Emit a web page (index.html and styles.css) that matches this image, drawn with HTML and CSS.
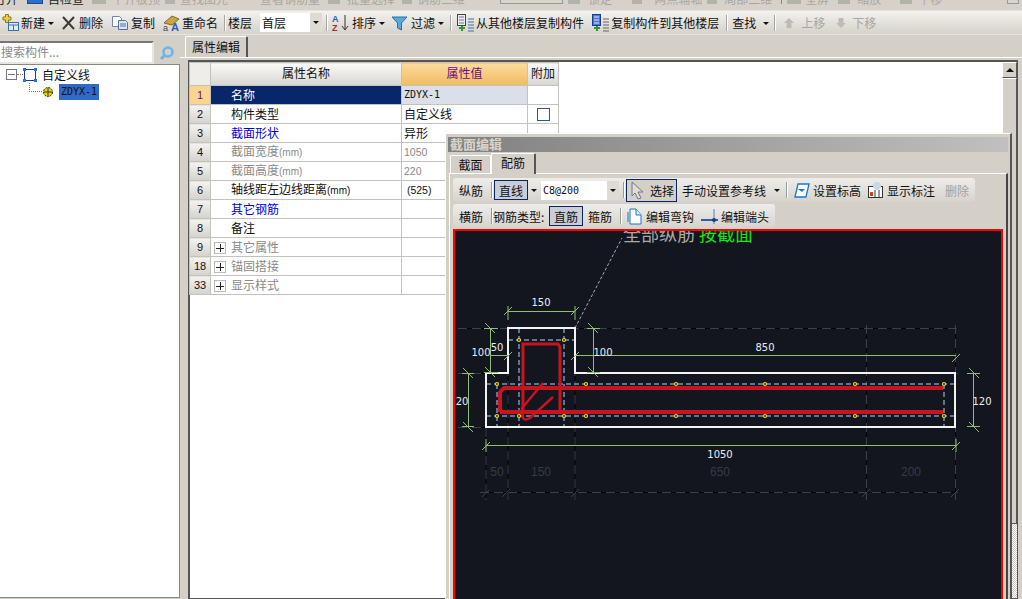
FILE: index.html
```html
<!DOCTYPE html>
<html lang="zh">
<head>
<meta charset="utf-8">
<title>属性编辑</title>
<link rel="stylesheet" href="styles.css">
</head>
<body>
<div class="app">
  <div class="topbar">
    <span class="ti dark mn6">打开</span><i class="tic blue w16 m9"></i><span class="ti dark m5">自检查</span>
    <i class="tic w14 m8"></i><span class="ti m6">平齐板顶</span><i class="tic w10 m5"></i><span class="ti m5">查找图元</span><span class="ti m32">查看钢筋量</span>
    <i class="tic w12 m8"></i><span class="ti m7">批量选择</span><i class="tic w10 m7"></i><span class="ti m5">钢筋三维</span>
    <i class="tbox m35"></i><i class="tic w12 m5"></i><span class="ti m8">锁定</span><i class="tic w10 m20"></i><span class="ti m12">两点辅轴</span>
    <i class="tic w10 m5"></i><span class="ti m7">局部三维</span><i class="tsep m9"></i><i class="tic w14 m5"></i><span class="ti m4">全屏</span>
    <i class="tic w12 m9"></i><span class="ti m7">缩放</span><i class="tic w12 m19"></i><span class="ti m6">平移</span><i class="tbox end m65"></i>
  </div>
  <div class="toolbar">
    <span class="tb"><svg width="18" height="18" viewBox="0 0 18 18"><path d="M3.500 0.500h3v2.500h2.500v3H6.500v2.500h-3V6H1V3h2.500z" fill="#e8d040" stroke="#8a7a20"/><rect x="6.500" y="8.500" width="10" height="8" fill="#dfe8f5" stroke="#3a70b0"/><path d="M6.500 11h10M11.500 11v5" stroke="#3a70b0"/></svg></span>
    <span class="tb">新建</span><span class="caret c3"></span>
    <span class="tb m6"><svg width="18" height="16" viewBox="0 0 18 16"><path d="M3 2l11 12M14 2L3 14" stroke="#3a3a3a" stroke-width="2"/></svg></span><span class="tb">删除</span>
    <span class="tb m8"><svg width="19" height="16" viewBox="0 0 19 16"><path d="M1.500 1.500h7l2 2v8h-9z" fill="#fff" stroke="#7088a8"/><path d="M7.500 5.500h7l2 2v7h-9z" fill="#dbe6f5" stroke="#5070a0"/><path d="M9 9h6M9 11h6" stroke="#5070a0"/></svg></span><span class="tb">复制</span>
    <span class="tb m8"><svg width="18" height="18" viewBox="0 0 18 18"><path d="M1 9l8-7 7 3-7 6z" fill="#c9a63e" stroke="#7d6a30"/><text x="0" y="17" class="rn-a">a</text><text x="8" y="17" class="rn-b">A</text></svg></span><span class="tb">重命名</span>
    <span class="sep m6 r2"></span><span class="tb">楼层</span>
    <span class="combo floor m8"><span>首层</span><i class="combo-btn"></i></span>
    <span class="sep m4 r3"></span>
    <span class="tb"><svg width="20" height="18" viewBox="0 0 20 18"><text x="1" y="8" class="az a">A</text><text x="1" y="17" class="az z">Z</text><path d="M14 1v14M11 12l3 4 3-4" fill="none" stroke="#333"/></svg></span><span class="tb">排序</span><span class="caret c3"></span>
    <span class="tb m6"><svg width="19" height="16" viewBox="0 0 19 16"><path d="M1 2h15l-5.500 6v7l-4-2V8z" fill="#58a8d8" stroke="#2a70a8"/></svg></span><span class="tb">过滤</span><span class="caret c3"></span>
    <span class="sep m6 r4"></span>
    <span class="tb"><svg width="19" height="18" viewBox="0 0 19 18"><rect x="1.500" y="0.500" width="8" height="11" fill="#e8eef8" stroke="#444"/><path d="M3 9h5M3 6h5M3 3h5" stroke="#777"/><path d="M3 14h6M6 12v5" stroke="#2a9a30" stroke-width="2"/><path d="M12 5h6M12 8h6M12 11h6M12 14h6M12 17h6" stroke="#4070a8"/></svg></span><span class="tb">从其他楼层复制构件</span>
    <span class="tb m8"><svg width="18" height="18" viewBox="0 0 18 18"><rect x="0.500" y="0.500" width="8" height="11" fill="#4a78d8" stroke="#1a3a90"/><path d="M2 3h5M2 6h5M2 9h5" stroke="#dfe8f8"/><path d="M2 14h6M5 12v5" stroke="#2a9a30" stroke-width="2"/><path d="M11 5h6M11 8h6M11 11h6M11 14h6M11 17h6" stroke="#666"/></svg></span><span class="tb">复制构件到其他楼层</span>
    <span class="sep m7 r4"></span><span class="tb">查找</span><span class="caret c7"></span>
    <span class="sep m5 r5"></span>
    <span class="tb off"><svg width="12" height="12" viewBox="0 0 12 12"><path d="M6 1l5 5H8.500v5h-5V6H1z" fill="#bbb"/></svg></span><span class="tb off m5">上移</span>
    <span class="tb off m10"><svg width="12" height="12" viewBox="0 0 12 12"><path d="M6 11L1 6h2.500V1h5v5H11z" fill="#bbb"/></svg></span><span class="tb off m4">下移</span>
  </div>
  <div class="main">
    <aside class="left">
      <div class="search"><span class="search-box">搜索构件...</span><svg width="18" height="18" viewBox="0 0 18 18"><circle cx="10" cy="8" r="4.500" fill="none" stroke="#6ab4ea" stroke-width="2.500"/><path d="M7 11l-4 4" stroke="#6ab4ea" stroke-width="3"/></svg></div>
      <div class="tree">
        <div class="node"><span class="minus"></span><i class="dots"></i><svg width="14" height="14" viewBox="0 0 14 14"><rect x="1.500" y="1.500" width="11" height="11" fill="#fff" stroke="#18407f"/><path d="M0 0h3v3H0zM11 0h3v3h-3zM0 11h3v3H0zM11 11h3v3h-3z" fill="#2a70e0"/></svg><span class="node-label">自定义线</span></div>
        <div class="node child"><i class="elbow"></i><svg width="12" height="12" viewBox="0 0 12 12"><circle cx="6" cy="6" r="4.500" fill="#e6d800" stroke="#222" stroke-dasharray="2 1"/><path d="M2 6h8M6 2v8" stroke="#333"/></svg><span class="sel">ZDYX-1</span></div>
      </div>
    </aside>
    <section class="right">
      <div class="tabs"><span class="tab">属性编辑</span></div>
      <div class="pane">
        <div class="grid-wrap">
          <table class="grid">
            <tr class="head"><th class="idx"></th><th class="name">属性名称</th><th class="val">属性值</th><th class="add">附加</th></tr>
            <tr class="cur"><td class="idx">1</td><td class="name">名称</td><td class="val mono">ZDYX-1</td><td class="add"></td></tr>
            <tr><td class="idx">2</td><td class="name">构件类型</td><td class="val">自定义线</td><td class="add"><i class="check"></i></td></tr>
            <tr><td class="idx">3</td><td class="name blue">截面形状</td><td class="val">异形</td><td class="add"></td></tr>
            <tr><td class="idx">4</td><td class="name gray">截面宽度<span class="unit">(mm)</span></td><td class="val gray num">1050</td><td class="add"></td></tr>
            <tr><td class="idx">5</td><td class="name gray">截面高度<span class="unit">(mm)</span></td><td class="val gray num">220</td><td class="add"></td></tr>
            <tr><td class="idx">6</td><td class="name">轴线距左边线距离<span class="unit">(mm)</span></td><td class="val num">&nbsp;(525)</td><td class="add"></td></tr>
            <tr><td class="idx">7</td><td class="name blue">其它钢筋</td><td class="val"></td><td class="add"></td></tr>
            <tr><td class="idx">8</td><td class="name">备注</td><td class="val"></td><td class="add"></td></tr>
            <tr><td class="idx">9</td><td class="name gray plus"><i class="pl"></i>其它属性</td><td class="val"></td><td class="add"></td></tr>
            <tr><td class="idx">18</td><td class="name gray plus"><i class="pl"></i>锚固搭接</td><td class="val"></td><td class="add"></td></tr>
            <tr><td class="idx">33</td><td class="name gray plus"><i class="pl"></i>显示样式</td><td class="val"></td><td class="add"></td></tr>
          </table>
          <div class="vscroll"><span class="sb-up"></span><span class="sb-thumb"></span><span class="sb-track"></span></div>
        </div>
      </div>
    </section>
  </div>

  <div class="dialog">
    <div class="dlg-title">截面编辑</div>
    <div class="dlg-tabs"><span class="dtab">截面</span><span class="dtab on">配筋</span></div>
    <div class="dlg-body">
      <div class="bar">
        <span class="b">纵筋</span><i class="bsep m8"></i><span class="b press m1">直线</span><span class="caret c3"></span>
        <span class="combo c8 m4"><span>C8@200</span><i class="combo-btn"></i></span><i class="bsep m4"></i>
        <span class="b press sel-btn m1"><svg width="18" height="19" viewBox="0 0 18 19"><path d="M3 1l11 10H9l3 6-3 1-3-6-3 3z" fill="#ddd" stroke="#777"/></svg>选择</span>
        <span class="b m5">手动设置参考线</span><span class="caret c8w"></span><i class="bsep m6"></i>
        <span class="b m6"><svg class="gap3" width="16" height="15" viewBox="0 0 16 15"><path d="M4 1h11l-3 13H1z" fill="#fff" stroke="#1878c8" stroke-width="1.300"/><path d="M4 6h7l-3 3z" fill="#1878c8"/></svg>设置标高</span>
        <span class="b m7"><svg class="gap4" width="15" height="16" viewBox="0 0 15 16"><rect x="0.500" y="4.500" width="14" height="11" fill="#fff" stroke="#333"/><circle cx="9" cy="4" r="4" fill="#c8d8e8"/><path d="M7 8v7M11 8v7" stroke="#333"/><rect x="2" y="10" width="3" height="4" fill="#d04020"/></svg>显示标注</span>
        <span class="b dim m10">删除</span>
      </div>
      <div class="bar">
        <span class="b">横筋</span><i class="bsep m8"></i><span class="b rtype">钢筋类型:</span><span class="b press m3">直筋</span><span class="b m5">箍筋</span><i class="bsep m8"></i>
        <span class="b m5"><svg class="gap3" width="16" height="17" viewBox="0 0 16 17"><path d="M3 1h6l5 6v9H3z" fill="#fff" stroke="#1878c8"/><path d="M9 1v6h5" fill="#dce8f5" stroke="#1878c8"/><path d="M1 4v10" stroke="#1878c8"/></svg>编辑弯钩</span>
        <span class="b m7"><svg class="gap3" width="17" height="17" viewBox="0 0 17 17"><path d="M0 12h17" stroke="#2a60b0" stroke-width="2"/><path d="M13 1v15" stroke="#5080c0"/><circle cx="13" cy="12" r="2" fill="#1a3a80"/></svg>编辑端头</span>
      </div>
      <div class="canvas">
        <svg class="drawing" width="546" height="368" viewBox="455 231 546 368">
          <defs>
            <g id="grid-lines">
              <path d="M458 328.500H958M458 373.500H490M575 373.500H958M458 427.500H486"/>
              <path d="M508 325V500M575 325V500M866.500 325V500M955.500 325V500"/>
              <path d="M486 428V500M480 492.500H958"/>
            </g>
          </defs>
          <use href="#grid-lines" class="dash-black"/>
          <use href="#grid-lines" class="dash-gray"/>
          <path class="tick" d="M482 497l7-7M502 497l8-8M571 497l8-8M862 497l8-8M951 497l8-8"/>
          <g class="dash-blue">
            <path d="M519 328V428M564 328V428M497 384V428M944 384V428"/>
            <path d="M508 340H575M486 384H955M486 416H955"/>
          </g>
          <path class="leader" d="M575 328L622 238"/>
          <path class="outline" d="M508 328H575V373H955V427H486V373H508Z"/>
          <g class="rebar">
            <path class="thin" d="M523 412V344H558L560 347V412"/>
            <path d="M500 412V392L504 388H943M500 412H943"/>
            <path class="hook" d="M523 407L543 383M553 397L530 418Q525 421 523 418L522 407"/>
          </g>
          <g class="pts">
            <circle cx="519" cy="340" r="1.500"/><circle cx="564" cy="340" r="1.500"/>
            <circle cx="497" cy="384" r="1.500"/><circle cx="586" cy="384" r="1.500"/><circle cx="676" cy="384" r="1.500"/><circle cx="765" cy="384" r="1.500"/><circle cx="855" cy="384" r="1.500"/><circle cx="944" cy="384" r="1.500"/>
            <circle cx="497" cy="416" r="1.500"/><circle cx="519" cy="416" r="1.500"/><circle cx="564" cy="416" r="1.500"/><circle cx="586" cy="416" r="1.500"/><circle cx="676" cy="416" r="1.500"/><circle cx="765" cy="416" r="1.500"/><circle cx="855" cy="416" r="1.500"/><circle cx="944" cy="416" r="1.500"/>
          </g>
          <g class="dim-line">
            <path d="M508 311.500H575M504 315l8-8M571 315l8-8M508 306V320M575 306V320"/>
            <path d="M490.500 328V373M484 328.500H498M484 372.500H498M485 323l10 10M485 367l10 10"/>
            <path d="M508 355.500H490M504 360l8-8M575 355.500H956M571 360l8-8M952 362l8-8"/>
            <path d="M593.500 328V373M587 328.500H600M587 372.500H600M588 323l10 10M588 367l10 10"/>
            <path d="M468.500 373V427M462 373.500H474M462 426.500H474M463 368l10 10M463 422l10 10"/>
            <path d="M973.500 373V427M967 373.500H980M967 426.500H980M969 368l10 10M969 422l10 10"/>
            <path d="M486 445.500H956M482 450l8-8M952 450l8-8M486 439V452M956 439V452"/>
          </g>
          <g class="label">
            <text x="541" y="306">150</text>
            <text x="497" y="351">50</text>
            <text x="481" y="356">100</text>
            <text x="603" y="356">100</text>
            <text x="765" y="351">850</text>
            <text x="462" y="405">20</text>
            <text x="982" y="405">120</text>
            <text x="720" y="458">1050</text>
          </g>
          <g class="label-dim">
            <text x="497" y="476">50</text>
            <text x="541" y="476">150</text>
            <text x="720" y="476">650</text>
            <text x="911" y="476">200</text>
          </g>
          <text class="note" x="623" y="241">全部纵筋 <tspan class="note-g">按截面</tspan></text>
        </svg>
      </div>
    </div>
  </div>
</div>
</body>
</html>
```
FILE: styles.css
```css
* { box-sizing: border-box; }
html, body { margin: 0; height: 100%; overflow: hidden; }
body { font-family: "Noto Sans CJK SC", "Liberation Sans", sans-serif; font-size: 12px; color: #111; background: #d4d0c8; }
.app { position: relative; width: 1022px; height: 599px; overflow: hidden; background: #d4d0c8; }
svg { display: block; flex: none; }

.m1 { margin-left: 1px; }
.m3 { margin-left: 3px; }
.m4 { margin-left: 4px; }
.m5 { margin-left: 5px; }
.m6 { margin-left: 6px; }
.m7 { margin-left: 7px; }
.m8 { margin-left: 8px; }
.m9 { margin-left: 9px; }
.m10 { margin-left: 10px; }
.m12 { margin-left: 12px; }
.m19 { margin-left: 19px; }
.m20 { margin-left: 20px; }
.m32 { margin-left: 32px; }
.m35 { margin-left: 35px; }
.m65 { margin-left: 65px; }
.mn6 { margin-left: -6px; }

.topbar { height: 11px; overflow: hidden; display: flex; align-items: flex-start; background: #d6d2cb; border-bottom: 1px solid #e4e2dc; white-space: nowrap; }
.ti { flex: none; line-height: 14px; margin-top: -8px; color: #a9a7a1; }
.ti.dark { color: #222; }
.tic { flex: none; display: block; height: 4px; background: #b4b2ac; }
.tic.blue { background: #2a70c8; border: 1px solid #1a4a90; border-top: 0; }
.w10 { width: 10px; }
.w12 { width: 12px; }
.w14 { width: 14px; }
.w16 { width: 16px; }
.tbox { flex: none; display: block; width: 63px; height: 4px; background: #d8d5ce; border: 1px solid #999; border-top: 0; }
.tbox.end { width: 12px; }
.tsep { flex: none; display: block; width: 1px; height: 4px; background: #888; }

.toolbar { height: 24px; display: flex; align-items: center; padding-left: 2px; background: linear-gradient(#f3f2ef, #dedbd5 70%, #d6d3cc); border-bottom: 1px solid #e6e4df; white-space: nowrap; }
.tb { display: inline-flex; align-items: center; height: 20px; flex: none; }
.tb svg { margin-right: 1px; }
.off { color: #a8a6a0; }
.caret { width: 0; height: 0; flex: none; border: 3px solid transparent; border-top: 3px solid #111; border-bottom: 0; margin: 1px 0 0; }
.c3 { margin-left: 3px; }
.c7 { margin-left: 7px; }
.c8w { margin-left: 8px; }
.sep { width: 2px; height: 16px; flex: none; background: #fff; border-left: 1px solid #a8a6a0; }
.r2 { margin-right: 2px; }
.r3 { margin-right: 3px; }
.r4 { margin-right: 4px; }
.r5 { margin-right: 7px; }
.combo { display: inline-flex; flex: none; align-items: center; justify-content: space-between; background: #fff; padding-left: 2px; white-space: nowrap; }
.combo-btn { display: flex; align-items: center; justify-content: center; width: 12px; height: 100%; background: #dedbd5; }
.combo-btn::after { content: ""; border: 3px solid transparent; border-top: 3px solid #111; border-bottom: 0; }
.floor { width: 62px; height: 19px; }

.main { display: flex; height: 564px; }
.left { width: 180px; flex: none; padding-top: 6px; background: #d4d0c8; }
.search { display: flex; align-items: center; height: 23px; gap: 4px; }
.search-box { width: 154px; height: 23px; background: #fff; border: 2px solid; border-color: #777 #e8e6e0 #e8e6e0 #777; border-left: 0; color: #888; line-height: 17px; padding-left: 1px; }
.tree { height: 534px; background: #fff; border: 1px solid #8a887f; border-left: 0; padding-top: 1px; }
.node { display: flex; align-items: center; height: 17px; padding-left: 6px; }
.minus { width: 11px; height: 11px; border: 1px solid #777; background: linear-gradient(#777, #777) center / 7px 1px no-repeat #fff; }
.dots { width: 6px; border-top: 1px dotted #777; }
.node-label { margin-left: 5px; }
.child { padding-left: 29px; }
.elbow { width: 13px; height: 9px; margin-top: -9px; border-left: 1px dotted #777; border-bottom: 1px dotted #777; }
.sel { background: #316ac5; color: #111; font-family: "DejaVu Sans Mono", monospace; font-size: 10px; line-height: 16px; padding: 0 2px; margin-left: 5px; }

.right { flex: 1; min-width: 0; display: flex; flex-direction: column; padding: 1px 0 0 8px; }
.tabs { height: 21px; display: flex; margin-left: -3px; }
.tab { display: block; width: 63px; height: 21px; background: #d4d0c8; border: 1px solid #fff; border-right: 2px solid #555; border-bottom: 0; border-radius: 2px 2px 0 0; padding-left: 6px; line-height: 20px; }
.pane { flex: 1; padding: 2px 0 0; margin-left: -8px; padding-left: 8px; background: #d4d0c8; border-top: 1px solid #fff; }
.grid-wrap { height: 100%; width: 830px; position: relative; display: flex; background: #fff; border: 1px solid #555; border-width: 2px 1px 1px 2px; }
.grid { border-collapse: collapse; table-layout: fixed; width: 369px; height: 0; align-self: flex-start; margin-left: -1px; }
.grid th, .grid td { height: 19px; padding: 0; border: 1px solid #c4c2bc; font-weight: 400; overflow: hidden; white-space: nowrap; line-height: 16px; }
.grid tr { height: 19px; }
.grid .head th { height: 23px; padding-bottom: 2px; background: linear-gradient(#fafaf8, #d8d6d0); text-align: center; }
.grid .head .idx { width: 21px; background: #eeede9; }
.grid .head .name { width: 191px; }
.grid .head .val { width: 126px; background: linear-gradient(#fbdb9c, #f0bc60); color: #6a1080; }
.grid .head .add { width: 31px; }
.grid td.idx { text-align: center; background: linear-gradient(#f4f3f0, #d4d2cc); font-family: "Liberation Sans", sans-serif; font-size: 11px; }
.grid td.name { padding-left: 20px; }
.grid td.val { padding-left: 2px; }
.grid .cur .idx { background: #fbd58e; color: #6a1080; }
.grid .cur .name { background: #08266a; color: #fff; }
.grid .cur .val { background: #dbdfe9; }
.grid td.mono { font-family: "DejaVu Sans Mono", monospace; font-size: 10px; }
.grid td.num { font-family: "Liberation Sans", sans-serif; font-size: 10.500px; }
.unit { font-family: "Liberation Sans", sans-serif; font-size: 10px; }
.blue { color: #0000e0; }
.gray { color: #8a8a8a; }
.grid td.plus { padding-left: 3px; }
.pl { display: inline-block; width: 12px; height: 12px; margin-right: 5px; vertical-align: -2px; border: 1px solid #bbb; background: linear-gradient(#222, #222) center / 8px 1px no-repeat, linear-gradient(#222, #222) center / 1px 8px no-repeat, #fff; }
.check { display: block; width: 13px; height: 13px; margin: 0 auto; border: 1px solid #2a5a8a; background: #fff; }
.vscroll { position: absolute; right: 0; top: 0; bottom: 0; width: 15px; display: flex; flex-direction: column; background: #d4d0c8; }
.sb-up { height: 16px; flex: none; background: #d4d0c8; border: 1px solid; border-color: #fff #555 #555 #fff; display: flex; align-items: center; justify-content: center; }
.sb-up::after { content: ""; border: 4px solid transparent; border-bottom: 4px solid #111; border-top: 0; }
.sb-thumb { height: 446px; flex: none; border: 1px solid; border-color: #fff #555 #555 #fff; background: #d4d0c8; }
.sb-track { flex: 1; background: repeating-conic-gradient(#fff 0 25%, #d4d0c8 0 50%) 0 0 / 2px 2px; }

.dialog { position: absolute; left: 445px; top: 133px; width: 567px; height: 480px; background: #d4d0c8; border: 1px solid #fff; border-right: 2px solid #555; border-bottom: 2px solid #555; padding: 3px 2px; }
.dlg-title { height: 15px; background: linear-gradient(90deg, #808080, #c0c0c0); color: #d8d4cc; font-weight: 700; font-size: 13px; line-height: 14px; padding-left: 2px; overflow: hidden; }
.dlg-tabs { display: flex; height: 21px; padding: 0 0 0 2px; align-items: flex-end; }
.dtab { height: 18px; width: 41px; background: #d4d0c8; border: 1px solid #fff; border-bottom: 0; border-radius: 2px 2px 0 0; text-align: center; line-height: 17px; }
.dtab.on { height: 21px; width: 45px; border-right: 2px solid #555; line-height: 17px; margin-bottom: -1px; position: relative; z-index: 1; }
.dlg-body { height: 440px; margin-left: 1px; border: 1px solid; border-color: #fff #444 #444 #fff; border-right-width: 2px; padding: 4px 0 0 3px; }
.bar { display: flex; align-items: center; height: 24px; width: fit-content; padding: 0 6px; margin-bottom: 2px; background: linear-gradient(#eeedea, #d6d3cc); border-radius: 3px; white-space: nowrap; }
.b { display: inline-flex; align-items: center; height: 20px; flex: none; }
.press { width: 34px; justify-content: center; background: #c9cdd8; border: 1px solid #0a246a; height: 20px; }
.sel-btn { width: 51px; justify-content: flex-start; padding-left: 2px; height: 23px; background: #d4d0c8; }
.sel-btn svg { margin-right: 3px; }
.gap3 { margin-right: 3px; }
.gap4 { margin-right: 4px; }
.dim { color: #a3a19b; }
.rtype { width: 53px; }
.bsep { display: block; flex: none; width: 2px; height: 16px; border-left: 1px solid #999; background: #fff; }
.bar .c8 { width: 78px; height: 19px; font-family: "DejaVu Sans Mono", monospace; font-size: 10px; }
.canvas { height: 390px; width: 550px; margin-top: -1px; border: 2px solid #f00; background: #13161e; overflow: hidden; }
.dash-black { fill: none; stroke: #000; }
.dash-gray { fill: none; stroke: #3c4048; stroke-dasharray: 9 5; }
.tick { fill: none; stroke: #3c4048; }
.dash-blue path { fill: none; stroke: #a8d8ff; stroke-dasharray: 5 3; }
.leader { fill: none; stroke: #aaa; stroke-dasharray: 3 2; }
.outline { fill: none; stroke: #f4f4f4; stroke-width: 2; }
.rebar path { fill: none; stroke: #c8141e; stroke-width: 4; }
.rebar .thin { stroke-width: 3; }
.rebar .hook { stroke-width: 2.500; }
.pts circle { fill: #13161e; stroke: #ffd820; stroke-width: 1.200; }
.dim-line path { fill: none; stroke: #8ec070; }
.label text { fill: #e6eef4; font-family: "DejaVu Sans", sans-serif; font-size: 10px; text-anchor: middle; }
.label-dim text { fill: #373b44; font-family: "Liberation Sans", sans-serif; font-size: 12px; text-anchor: middle; }
.note { fill: #a8a8a8; font-size: 18px; }
.note-g { fill: #10e810; }
.az { font-family: "Liberation Sans", sans-serif; font-size: 9px; font-weight: 700; }
.a { fill: #2a5fb0; }
.z { fill: #a03030; }
.rn-a { font-family: "Liberation Sans", sans-serif; font-size: 9px; fill: #444; }
.rn-b { font-family: "Liberation Sans", sans-serif; font-size: 11px; font-weight: 700; fill: #2a5fb0; }
```
